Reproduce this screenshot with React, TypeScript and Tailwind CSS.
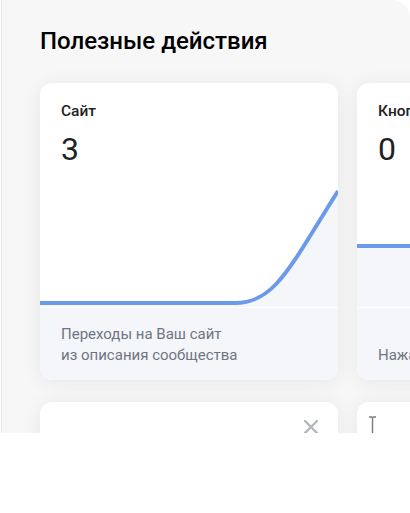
import React from 'react';

interface CardProps {
  title: string;
  value: number;
  path: string;
  lines: string[];
}

const LINE = '#6b9be8';
const FILL = '#f5f6fa';

const StatCard: React.FC<CardProps> = ({ title, value, path, lines }) => {
  return (
    <div className="w-[298px] h-[297px] shrink-0 rounded-xl bg-white overflow-hidden flex flex-col shadow-[0_2px_20px_rgba(0,0,0,0.07)]">
      <div className="px-[21px] pt-[18px]">
        <div className="text-[15.5px] leading-5 font-medium text-[#222] whitespace-nowrap">{title}</div>
        <div className="mt-[10px] text-[32px] leading-9 text-[#222]">{value}</div>
      </div>
      <svg className="block w-[298px] h-[140px] shrink-0" viewBox="0 0 298 140" preserveAspectRatio="none">
        <path d={`${path} L298 140 L0 140 Z`} fill={FILL} />
        <path d={path} fill="none" stroke={LINE} strokeWidth="4" strokeLinecap="butt" />
      </svg>
      <div className="h-px bg-white shrink-0" />
      <div className="flex-1 flex flex-col justify-end px-[21px] pb-[14px] bg-[#f5f6fa] text-[15px] leading-[21px] text-[#6f7581] whitespace-nowrap">
        {lines.map((l) => (
          <div key={l}>{l}</div>
        ))}
      </div>
    </div>
  );
};

const App: React.FC = () => {
  return (
    <div className="w-[410px] h-[513px] bg-white overflow-hidden" style={{ fontFamily: 'Roboto, "Noto Sans", sans-serif' }}>
      <div className="ml-px h-[433px] overflow-hidden bg-[#f7f7f7] border-l border-[#e4e4e4] rounded-tr-[18px] pl-[38px] pt-[26px]">
        <h2 className="text-[24px] leading-[30px] font-medium text-black whitespace-nowrap">Полезные действия</h2>

        <div className="mt-[27px] flex gap-[19px]">
          <StatCard
            title="Сайт"
            value={3}
            path="M0 136 L195 136 C235 136 250 100 298 24"
            lines={['Переходы на Ваш сайт', 'из описания сообщества']}
          />
          <StatCard
            title="Кнопка действия"
            value={0}
            path="M0 79 L298 79"
            lines={['Нажатия на кнопку действия']}
          />
        </div>

        <div className="mt-[22px] flex gap-[19px]">
          <div className="w-[298px] h-[200px] shrink-0 rounded-xl bg-white relative shadow-[0_2px_20px_rgba(0,0,0,0.07)]">
            <svg className="absolute left-[264px] top-[18px]" width="14" height="14" viewBox="0 0 14 14">
              <path d="M1 1 L13 13 M13 1 L1 13" stroke="#b3b6bd" strokeWidth="2.4" strokeLinecap="round" />
            </svg>
          </div>
          <div className="w-[298px] h-[200px] shrink-0 rounded-xl bg-white relative shadow-[0_2px_20px_rgba(0,0,0,0.07)]">
            <svg className="absolute left-[11px] top-[14px]" width="9" height="20" viewBox="0 0 9 20">
              <path d="M1 1 H3.5 Q4.5 1 4.5 2 V18 Q4.5 19 3.5 19 H1 M8 1 H5.5 Q4.5 1 4.5 2 M4.5 18 Q4.5 19 5.5 19 H8" fill="none" stroke="#ffffff" strokeWidth="3.2" />
              <path d="M1 1 H3.5 Q4.5 1 4.5 2 V18 Q4.5 19 3.5 19 H1 M8 1 H5.5 Q4.5 1 4.5 2 M4.5 18 Q4.5 19 5.5 19 H8" fill="none" stroke="#7a7a7a" strokeWidth="1.4" />
            </svg>
          </div>
        </div>
      </div>
    </div>
  );
};

export default App;
